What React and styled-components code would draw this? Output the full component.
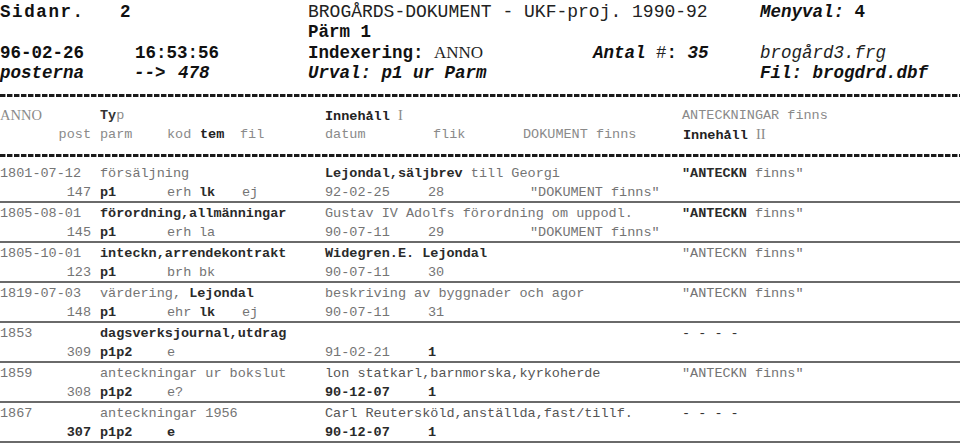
import styled, { createGlobalStyle } from 'styled-components'

const Global = createGlobalStyle`
  body {
    margin: 0;
    background: #fff;
    font-family: "Liberation Mono", "DejaVu Sans Mono", monospace;
  }
`

const Page = styled.div`
  width: 960px;
  height: 443px;
  overflow: hidden;
  background: #fff;
`

const Header = styled.header`
  padding-top: 2px;
  display: grid;
  grid-template-columns: 308px 285px 167px 1fr;
  grid-auto-rows: 20.3px;
  font-size: 17.5px;
  line-height: 20px;
  color: #111;
  white-space: pre;
`

const Cell = styled.div`
  display: flex;
  align-items: center;
  grid-column: ${p => p.$span || 'auto'};
`

const Pair = styled.div`
  display: grid;
  grid-template-columns: ${p => p.$cols};
  align-items: center;
`

const B = styled.span`
  font-weight: 700;
  color: #111;
  font-style: ${p => (p.$i ? 'italic' : 'normal')};
  letter-spacing: ${p => p.$ls || '0'};
`

const Plain = styled.span`
  font-family: ${p => (p.$serif ? '"Liberation Serif", serif' : 'inherit')};
  font-style: ${p => (p.$i ? 'italic' : 'normal')};
  font-weight: 400;
  color: #222;
  font-size: ${p => p.$size || 'inherit'};
  letter-spacing: ${p => p.$ls || '0'};
`

const Dashes = styled.div`
  height: 3px;
  margin-top: ${p => p.$top};
  background: repeating-linear-gradient(90deg, #1a1a1a 0 5px, #9a9a9a 5px 6px, transparent 6px 7px);
`

const ColHead = styled.section`
  margin-top: 8px;
  font-size: 13.5px;
  color: #8a8a8a;
  white-space: pre;
`

const Line = styled.div`
  display: grid;
  grid-template-columns: ${p => p.$cols};
  height: ${p => p.$h || '20px'};
  align-items: center;
`

const Post = styled.span`
  text-align: right;
`

const Serif = styled.span`
  font-family: "Liberation Serif", serif;
  font-size: 14.5px;
  color: #8a8a8a;
`

const Strong = styled.span`
  font-weight: 700;
  color: ${p => p.$c || '#2a2a2a'};
`

const Body = styled.section`
  margin-top: 6px;
  font-size: 13.5px;
  color: #747474;
  white-space: pre;
`

const Record = styled.div`
  border-bottom: 2px solid #6a6a6a;
`

const Dim = styled.span`
  color: ${p => p.$c || '#747474'};
  font-weight: ${p => (p.$b ? 700 : 400)};
`

const LINE1 = '100px 225px 357px 1fr'
const LINE2 = '91px 9px 67px 32px 43px 83px 103px 102px 1fr'
const HEAD2 = '91px 9px 67px 33px 40px 85px 108px 90px 160px 1fr'

const t = (text, bold, c) => ({ text, bold, c })

const records = [
  {
    anno: '1801-07-12',
    typ: [t('försäljning')],
    inn: [t('Lejondal,säljbrev', true), t(' till Georgi')],
    ant: [t('"ANTECKN', true), t(' finns"')],
    post: '147', parm: 'p1', kod: 'erh', tem: t('lk', true), fil: 'ej',
    datum: t('92-02-25'), flik: t('28'), dok: '"DOKUMENT finns"',
  },
  {
    anno: '1805-08-01',
    typ: [t('förordning,allmänningar', true)],
    inn: [t('Gustav IV Adolfs förordning om uppodl.')],
    ant: [t('"ANTECKN', true), t(' finns"')],
    post: '145', parm: 'p1', kod: 'erh', tem: t('la'), fil: '',
    datum: t('90-07-11'), flik: t('29'), dok: '"DOKUMENT finns"',
  },
  {
    anno: '1805-10-01',
    typ: [t('inteckn,arrendekontrakt', true)],
    inn: [t('Widegren.E. Lejondal', true)],
    ant: [t('"ANTECKN finns"')],
    post: '123', parm: 'p1', kod: 'brh', tem: t('bk'), fil: '',
    datum: t('90-07-11'), flik: t('30'), dok: '',
  },
  {
    anno: '1819-07-03',
    typ: [t('värdering, '), t('Lejondal', true)],
    inn: [t('beskriving av byggnader och agor')],
    ant: [t('"ANTECKN finns"')],
    post: '148', parm: 'p1', kod: 'ehr', tem: t('lk', true), fil: 'ej',
    datum: t('90-07-11'), flik: t('31'), dok: '',
  },
  {
    anno: '1853',
    typ: [t('dagsverksjournal,utdrag', true)],
    inn: [],
    ant: [t('- - - -', false, '#333')],
    post: '309', parm: 'p1p2', kod: 'e', tem: t(''), fil: '',
    datum: t('91-02-21'), flik: t('1', true), dok: '',
  },
  {
    anno: '1859',
    typ: [t('anteckningar ur bokslut')],
    inn: [t('lon statkarl,barnmorska,kyrkoherde', false, '#555')],
    ant: [t('"ANTECKN finns"')],
    post: '308', parm: 'p1p2', kod: 'e?', tem: t(''), fil: '',
    datum: t('90-12-07', true), flik: t('1', true), dok: '',
  },
  {
    anno: '1867',
    typ: [t('anteckningar 1956')],
    inn: [t('Carl Reutersköld,anställda,fast/tillf.', false, '#555')],
    ant: [t('- - - -', false, '#333')],
    post: '307', parm: 'p1p2', kod: 'e', tem: t(''), fil: '',
    datum: t('90-12-07', true), flik: t('1', true), dok: '', last: true,
  },
]

const Runs = ({ items }) =>
  items.map((r, i) => (
    <Dim key={i} $b={r.bold} $c={r.bold ? '#2a2a2a' : r.c}>{r.text}</Dim>
  ))

function Row({ r }) {
  return (
    <Record>
      <Line $cols={LINE1}>
        <span>{r.anno}</span>
        <span><Runs items={r.typ} /></span>
        <span><Runs items={r.inn} /></span>
        <span><Runs items={r.ant} /></span>
      </Line>
      <Line $cols={LINE2} $h="18px">
        <Post>{r.last ? <Strong>{r.post}</Strong> : r.post}</Post>
        <span />
        <Strong>{r.parm}</Strong>
        <span>{r.last ? <Strong>{r.kod}</Strong> : r.kod}</span>
        <span><Runs items={[r.tem]} /></span>
        <span>{r.fil}</span>
        <span><Runs items={[r.datum]} /></span>
        <span><Runs items={[r.flik]} /></span>
        <span>{r.dok}</span>
      </Line>
    </Record>
  )
}

export default function App() {
  return (
    <Page>
      <Global />
      <Header>
        <Cell>
          <Pair $cols="120px 1fr">
            <B $ls="1.6px">{'Sidanr.'}</B>
            <B>2</B>
          </Pair>
        </Cell>
        <Cell $span="2 / 4">
          <Plain $size="18px">BROGÅRDS-DOKUMENT - UKF-proj. 1990-92</Plain>
        </Cell>
        <Cell>
          <B $i>Menyval: </B><B $i={false}>4</B>
        </Cell>

        <Cell />
        <Cell $span="2 / 5"><B>Pärm 1</B></Cell>

        <Cell>
          <Pair $cols="135px 1fr">
            <B>96-02-26</B>
            <B>16:53:56</B>
          </Pair>
        </Cell>
        <Cell>
          <B>Indexering: </B><Plain $serif $size="17px">ANNO</Plain>
        </Cell>
        <Cell>
          <B $i>Antal </B><Plain>#</Plain><B>: </B><B $i>35</B>
        </Cell>
        <Cell><Plain $i>brogård3.frg</Plain></Cell>

        <Cell>
          <Pair $cols="134px 44px 1fr">
            <B $i>posterna</B>
            <B $i>--&gt;</B>
            <B $i>478</B>
          </Pair>
        </Cell>
        <Cell $span="2 / 4">
          <B $i>Urval: p1 ur Parm</B>
        </Cell>
        <Cell><B $i>Fil: brogdrd.dbf</B></Cell>
      </Header>

      <Dashes $top="11px" />

      <ColHead>
        <Line $cols={LINE1}>
          <Serif>ANNO</Serif>
          <span><Strong $c="#333">Ty</Strong>p</span>
          <span><Strong $c="#222">Innehåll</Strong> <Serif>I</Serif></span>
          <span>ANTECKNINGAR finns</span>
        </Line>
        <Line $cols={HEAD2} $h="18px">
          <Post>post</Post>
          <span />
          <span>parm</span>
          <span>kod</span>
          <Strong $c="#222">tem</Strong>
          <span>fil</span>
          <span>datum</span>
          <span>flik</span>
          <span>DOKUMENT finns</span>
          <span><Strong $c="#222">Innehåll</Strong> <Serif>II</Serif></span>
        </Line>
      </ColHead>

      <Dashes $top="11px" />

      <Body>
        {records.map((r, i) => <Row key={i} r={r} />)}
      </Body>
    </Page>
  )
}
